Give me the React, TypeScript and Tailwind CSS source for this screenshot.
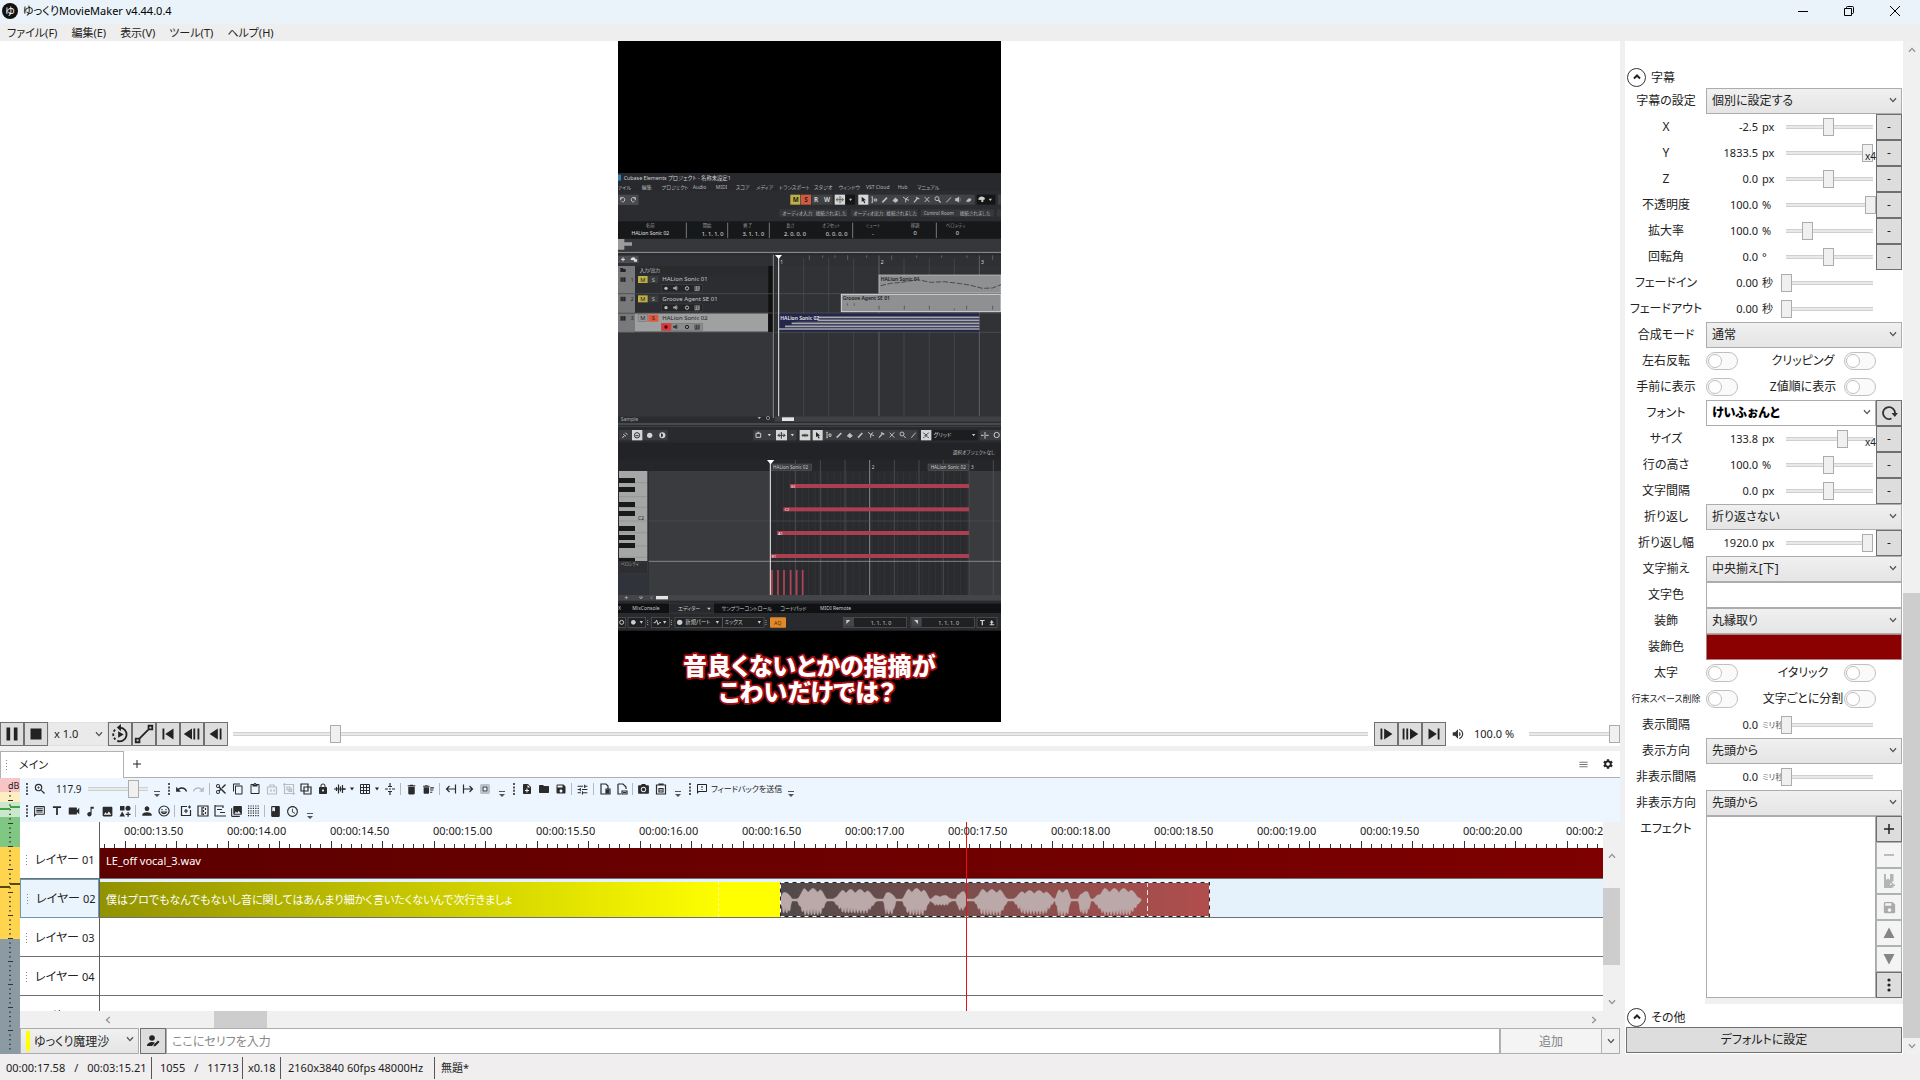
import { useState } from 'react';
import type { ReactNode } from 'react';
import {
  MdAccessTime,
  MdBlurOn,
  MdBook,
  MdContentCopy,
  MdContentCut,
  MdContentPaste,
  MdDelete,
  MdDeleteSweep,
  MdFolder,
  MdGridOn,
  MdImage,
  MdLock,
  MdMenu,
  MdMusicNote,
  MdNoteAdd,
  MdOutlineFeedback,
  MdOutlineMessage,
  MdPerson,
  MdPhotoCamera,
  MdPhotoLibrary,
  MdRedo,
  MdSave,
  MdSelectAll,
  MdSettings,
  MdTitle,
  MdTune,
  MdUndo,
  MdVideocam,
  MdVolumeUp,
  MdZoomIn,
} from 'react-icons/md';

const CJK = '"Noto Sans","Noto Sans CJK JP",sans-serif';

/* ---------- 共通パーツ ---------- */

function Chevron({ className = '' }: { className?: string }) {
  return (
    <svg viewBox="0 0 8 8" className={`w-2 h-2 fill-none stroke-[#555] ${className}`} strokeWidth="1.3">
      <path d="M1 2.2 4 5.6 7 2.2" />
    </svg>
  );
}

function Dropdown({ label, value, white, bold }: { label: string; value: string; white?: boolean; bold?: boolean }) {
  return (
    <div className="relative flex-1 min-w-0 h-[26px]">
      <select
        aria-label={label}
        className={`appearance-none w-full h-full border border-[#acacac] pl-[5px] pr-5 text-[12px] leading-4 ${
          white ? 'bg-white' : 'bg-linear-to-b from-[#f0f0f0] to-[#e5e5e5]'
        } ${bold ? 'font-black text-black' : ''}`}
      >
        <option>{value}</option>
      </select>
      <Chevron className="absolute right-[5px] top-[8px] pointer-events-none" />
    </div>
  );
}

function Slider({ label, value, className = '' }: { label: string; value: number; className?: string }) {
  return (
    <input
      type="range"
      aria-label={label}
      defaultValue={value}
      className={`appearance-none h-[18px] m-0 bg-no-repeat bg-right bg-[length:calc(100%-5px)_4px] bg-[linear-gradient(#d0d0d0_1px,#e7eaea_1px,#e7eaea_3px,#d0d0d0_3px)] [&::-webkit-slider-thumb]:appearance-none [&::-webkit-slider-thumb]:w-[11px] [&::-webkit-slider-thumb]:h-[18px] [&::-webkit-slider-thumb]:bg-[#f0f0f0] [&::-webkit-slider-thumb]:border [&::-webkit-slider-thumb]:border-[#acacac] ${className}`}
    />
  );
}

function Toggle({ label }: { label: string }) {
  return (
    <input
      type="checkbox"
      role="switch"
      aria-label={label}
      className="appearance-none w-8 h-[18px] shrink-0 rounded-full border border-[#c0c0c0] bg-[#fafafa] flex items-center pl-px before:block before:w-[14px] before:h-[14px] before:rounded-full before:border before:border-[#c0c0c0] before:bg-white"
    />
  );
}

function Square({ label, children, disabled }: { label: string; children: ReactNode; disabled?: boolean }) {
  return (
    <button
      aria-label={label}
      disabled={disabled}
      className={`w-[26px] h-[26px] shrink-0 border flex items-center justify-center text-[12px] ${
        disabled ? 'bg-[#f4f4f4] border-[#adb2b5] text-[#aaa]' : 'bg-[#ddd] border-[#707070] text-[#222]'
      }`}
    >
      {children}
    </button>
  );
}

/* ---------- 字幕の設定パネル ---------- */

function Row({ label, children, small }: { label: string; children: ReactNode; small?: boolean }) {
  return (
    <div className="flex items-center h-[26px]">
      <span className={`w-[80px] shrink-0 text-center whitespace-nowrap ${small ? 'text-[9px]' : 'text-[12px]'}`}>{label}</span>
      {children}
    </div>
  );
}

type NumProps = {
  label: string;
  value: string;
  unit: string;
  pos: number;
  button?: boolean;
  x4?: boolean;
  tinyUnit?: boolean;
  wide?: boolean;
};

function NumRow({ label, value, unit, pos, button, x4, tinyUnit, wide }: NumProps) {
  return (
    <Row label={label}>
      <span className="w-[52px] shrink-0 text-right text-[11px]">{value}</span>
      <span className={`w-[23px] shrink-0 pl-1 whitespace-nowrap ${tinyUnit ? 'text-[8px] text-[#555]' : 'text-[11px]'}`}>{unit}</span>
      <span className={`relative flex-1 min-w-0 flex ${wide ? '' : 'pr-[3px]'}`}>
        <Slider label={label} value={pos} className="w-full" />
        {x4 && <span className="absolute right-0 top-[6px] text-[10px] leading-3">x4</span>}
      </span>
      {button ? <Square label={`${label} アニメーション`}>-</Square> : <span className="w-[26px] shrink-0" />}
    </Row>
  );
}

function SelectRow({ label, value }: { label: string; value: string }) {
  return (
    <Row label={label}>
      <Dropdown label={label} value={value} />
    </Row>
  );
}

function ToggleRow({ a, b, small }: { a: string; b: string; small?: boolean }) {
  return (
    <Row label={a} small={small}>
      <Toggle label={a} />
      <span className="flex-1 pl-6 text-center whitespace-nowrap">{b}</span>
      <Toggle label={b} />
      <span className="w-[26px] shrink-0" />
    </Row>
  );
}

function SectionHead({ title }: { title: string }) {
  return (
    <div className="flex items-center gap-[5px] h-[22px] pl-px">
      <button aria-label={title} className="w-[19px] h-[19px] rounded-full border border-[#333] bg-white flex items-center justify-center">
        <svg viewBox="0 0 10 10" className="w-[10px] h-[10px] fill-none stroke-[#222]" strokeWidth="2">
          <path d="M2 6.5 5 3.5 8 6.5" />
        </svg>
      </button>
      <span className="pt-[2px]">{title}</span>
    </div>
  );
}

function SettingsPanel() {
  return (
    <aside className="w-[295px] shrink-0 flex bg-white">
      <div className="flex-1 min-w-0 pl-px pr-px pt-[25px] flex flex-col overflow-hidden">
        <SectionHead title="字幕" />
        <SelectRow label="字幕の設定" value="個別に設定する" />
        <NumRow label="X" value="-2.5" unit="px" pos={52} button />
        <NumRow label="Y" value="1833.5" unit="px" pos={100} button x4 />
        <NumRow label="Z" value="0.0" unit="px" pos={52} button />
        <NumRow label="不透明度" value="100.0" unit="%" pos={100} button wide />
        <NumRow label="拡大率" value="100.0" unit="%" pos={26} button />
        <NumRow label="回転角" value="0.0" unit="°" pos={52} button />
        <NumRow label="フェードイン" value="0.00" unit="秒" pos={0} />
        <NumRow label="フェードアウト" value="0.00" unit="秒" pos={0} />
        <SelectRow label="合成モード" value="通常" />
        <ToggleRow a="左右反転" b="クリッピング" />
        <ToggleRow a="手前に表示" b="Z値順に表示" />
        <Row label="フォント">
          <Dropdown label="フォント" value="けいふぉんと" white bold />
          <Square label="フォントを更新">
            <svg viewBox="0 0 18 18" className="w-[18px] h-[18px]">
              <path d="M11.5 14.5A6 6 0 1 1 15 9.5" className="fill-none stroke-[#333]" strokeWidth="1.8" />
              <path d="M11.5 9h6.5l-3.200 4z" className="fill-[#333]" />
            </svg>
          </Square>
        </Row>
        <NumRow label="サイズ" value="133.8" unit="px" pos={69} button x4 />
        <NumRow label="行の高さ" value="100.0" unit="%" pos={52} button />
        <NumRow label="文字間隔" value="0.0" unit="px" pos={52} button />
        <SelectRow label="折り返し" value="折り返さない" />
        <NumRow label="折り返し幅" value="1920.0" unit="px" pos={100} button />
        <SelectRow label="文字揃え" value="中央揃え[下]" />
        <Row label="文字色">
          <button aria-label="文字色" className="flex-1 h-[26px] bg-white border border-[#acacac]" />
        </Row>
        <SelectRow label="装飾" value="丸縁取り" />
        <Row label="装飾色">
          <button aria-label="装飾色" className="flex-1 h-[26px] bg-[#8b0000] border border-[#b08080]" />
        </Row>
        <ToggleRow a="太字" b="イタリック" />
        <ToggleRow a="行末スペース削除" b="文字ごとに分割" small />
        <NumRow label="表示間隔" value="0.0" unit="ミリ秒" pos={0} tinyUnit />
        <SelectRow label="表示方向" value="先頭から" />
        <NumRow label="非表示間隔" value="0.0" unit="ミリ秒" pos={0} tinyUnit />
        <SelectRow label="非表示方向" value="先頭から" />
        <div className="flex">
          <span className="w-[80px] shrink-0 text-center leading-[26px]">エフェクト</span>
          <div className="flex-1 border border-[#acacac]" />
          <div className="flex flex-col">
            <Square label="エフェクトを追加">
              <svg viewBox="0 0 12 12" className="w-3 h-3 stroke-[#222]" strokeWidth="1.5"><path d="M6 1v10M1 6h10" /></svg>
            </Square>
            <Square label="エフェクトを削除" disabled>
              <svg viewBox="0 0 12 12" className="w-3 h-3 stroke-[#aaa]" strokeWidth="1.5"><path d="M1 6h10" /></svg>
            </Square>
            <Square label="テンプレートに追加" disabled>
              <svg viewBox="0 0 12 14" className="w-3 h-[14px] fill-[#b4b4b4]">
                <path d="M1 0h2v6l2-1.500L7 6V0h3.500v7.500H9v2H7V11h2v3H1z" /><path d="M9 9h1.500v1.500H12V12h-1.500v1.500H9V12H8v-1.500h1z" />
              </svg>
            </Square>
            <Square label="保存" disabled><MdSave size={15} /></Square>
            <Square label="上へ" disabled>
              <svg viewBox="0 0 12 12" className="w-3 h-3 fill-[#858585]"><path d="M6 0.500 11.500 11H0.500z" /></svg>
            </Square>
            <Square label="下へ" disabled>
              <svg viewBox="0 0 12 12" className="w-3 h-3 fill-[#858585]"><path d="M6 11.500 0.500 1h11z" /></svg>
            </Square>
            <Square label="その他の操作">
              <svg viewBox="0 0 12 14" className="w-3 h-[14px] fill-[#222]">
                <circle cx="6" cy="2" r="1.600" /><circle cx="6" cy="7" r="1.600" /><circle cx="6" cy="12" r="1.600" />
              </svg>
            </Square>
          </div>
        </div>
        <div className="ml-[79px] -mr-px h-[6px] shrink-0 bg-[#f0f0f0]" />
        <div className="h-[23px] pt-[2px]"><SectionHead title="その他" /></div>
        <button className="h-[26px] shrink-0 border border-[#707070] bg-[#ddd] text-[12px]">デフォルトに設定</button>
      </div>
      <div className="w-[17px] shrink-0 bg-[#f0f0f0] flex flex-col items-center">
        <Chevron className="rotate-180 mt-[5px] shrink-0 opacity-60" />
        <div className="flex-[538] " />
        <div className="w-full flex-[445] bg-[#cdcdcd]" />
        <Chevron className="my-1 shrink-0 opacity-60" />
      </div>
    </aside>
  );
}

/* ---------- プレビュー ---------- */

const arrangeLines = [506, 581, 656, 731, 807, 882, 958, 1033, 1108];
const editorLines = [481, 556, 631, 705, 779, 853, 927, 1000, 1077, 1150];
const notes = [
  { x: 540, y: 192, name: 'E2' },
  { x: 520, y: 262, name: 'C2' },
  { x: 501, y: 333, name: 'A1' },
  { x: 482, y: 402, name: 'E1' },
];

function ToolGlyphs({ x, y }: { x: number; y: number }) {
  // 矢印、範囲、鉛筆、消しゴム、はさみ、のり、ミュート、ズーム、線
  return (
    <g transform={`translate(${x} ${y})`} fill="none" stroke="#bdbdbd" strokeWidth="3">
      <rect x="-15" y="-15" width="30" height="30" fill="#d5d5d5" stroke="none" />
      <path d="M-5-9v16l4-4 4 8 3-2-4-7h6z" fill="#222" stroke="none" />
      <path d="M24-8h5M24 8h5M27-8V8M33-2h7v6h-7z" />
      <path d="M57 8 71-6" strokeWidth="5" />
      <path d="M89 3 96-5 104 2 97 8z" fill="#bdbdbd" />
      <path d="M119-8 127-2 135-8M127-2v10M127-2l10 4" />
      <path d="M152 8 163-5M158-7l10 5" strokeWidth="4" />
      <path d="M184-8 198 7M198-8 184 7" />
      <circle cx="221" cy="-3" r="6" /><path d="m225 1 7 8" strokeWidth="4" />
      <path d="M249 8 263-7" />
    </g>
  );
}

function Track({ y, no, name, selected }: { y: number; no: number; name: string; selected?: boolean }) {
  return (
    <g fontSize="17">
      <rect x="24" y={y} width="51" height="57" fill="#77797b" />
      <rect x="75" y={y} width="399" height="55" fill={selected ? '#9fa1a1' : '#2c2d30'} />
      <path d={`M31 ${y + 8}h16v14h-16zM36 ${y + 8}v14M41 ${y + 8}v14`} fill="#222" stroke="#777" />
      <text x="62" y={y + 21} fill="#222" fontSize="15">{no}</text>
      <rect x="84" y={y + 4} width="29" height="21" fill={selected ? '#999' : '#bdb047'} stroke={selected ? '#555' : 'none'} />
      <text x="91" y={y + 21} fill="#222">M</text>
      <rect x="115" y={y + 4} width="30" height="21" fill={selected ? '#e0553c' : '#3a3c3e'} />
      <text x="125" y={y + 21} fill={selected ? '#222' : '#bbb'}>S</text>
      <text x="157" y={y + 20} fill={selected ? '#222' : '#c8c8c8'} fontSize="18">{name}</text>
      <rect x="154" y={y + 30} width="124" height="22" fill={selected ? '#8b8d8d' : '#242527'} stroke="#5b5b5b" />
      {selected && <rect x="154" y={y + 30} width="30" height="22" fill="#d8393a" />}
      <circle cx="168" cy={y + 41} r="5" fill={selected ? '#400' : '#bbb'} />
      <path d={`M190 ${y + 38}h4l6-4v13l-6-4h-4zM203 ${y + 36}v9`} fill={selected ? '#333' : '#aaa'} stroke={selected ? '#333' : '#aaa'} />
      <circle cx="231" cy={y + 41} r="5" fill="none" stroke={selected ? '#222' : '#bbb'} strokeWidth="3" />
      <path d={`M255 ${y + 34}v14h4v-14M261 ${y + 34}v14h4v-14M268 ${y + 34}v14`} stroke={selected ? '#222' : '#bbb'} strokeWidth="2" fill="none" />
    </g>
  );
}

function ArrangeWindow() {
  return (
    <g transform="translate(0 357)">
      <rect x="24" y="39" width="1149" height="780" fill="#2a2c2f" />
      <rect x="24" y="39" width="1149" height="54" fill="#27292d" />
      <rect x="24" y="44" width="9" height="18" fill="#2d7fb5" />
      <text x="41" y="61" fontSize="16" fill="#d2d2d2">Cubase Elements プロジェクト - 名称未設定1</text>
      <g fontSize="15" fill="#b5b5b5">
        <text x="24" y="87">ァイル</text><text x="95" y="87">編集</text><text x="155" y="87">プロジェクト</text>
        <text x="248" y="87">Audio</text><text x="317" y="87">MIDI</text><text x="377" y="87">スコア</text>
        <text x="438" y="87">メディア</text><text x="508" y="87">トランスポート</text><text x="612" y="87">スタジオ</text>
        <text x="686" y="87">ウィンドウ</text><text x="768" y="87">VST Cloud</text><text x="863" y="87">Hub</text>
        <text x="921" y="87">マニュアル</text>
      </g>
      <rect x="24" y="104" width="62" height="31" fill="#48494c" />
      <g fill="none" stroke="#c8c8c8" strokeWidth="3">
        <path d="M38 113h-6v8M32 115c8-5 13-1 12 5s-5 6-9 5" /><path d="M69 113h7v8M76 115c-8-5-13-1-12 5s5 6 9 5" />
      </g>
      <rect x="541" y="104" width="30" height="30" fill="#bdb047" />
      <rect x="573" y="104" width="30" height="30" fill="#d4573f" />
      <rect x="605" y="104" width="63" height="30" fill="#404246" />
      <g fontSize="19" fontWeight="700" fill="#222">
        <text x="548" y="126">M</text><text x="583" y="126">S</text>
        <text x="612" y="126" fill="#ccc">R</text><text x="642" y="126" fill="#ccc">W</text>
      </g>
      <rect x="674" y="104" width="31" height="30" fill="#d5d5d5" />
      <path d="M679 119h21M690 108v22M684 113l-5 6 5 6M695 113l5 6-5 6" stroke="#333" fill="none" strokeWidth="2" />
      <rect x="707" y="104" width="28" height="30" fill="#151515" />
      <path d="M717 116h9l-4 7z" fill="#ccc" />
      <rect x="744" y="104" width="350" height="30" fill="#404246" />
      <ToolGlyphs x={760} y={119} />
      <path d="M1036 115h5l6-5v17l-6-4h-5zM1051 113v11M1068 124c5 3 14 1 15-4s-6-6-11-1" stroke="#bdbdbd" fill="#bdbdbd" />
      <rect x="1100" y="104" width="56" height="30" fill="#151515" />
      <path d="M1105 119c0-12 20-12 20-1l-5 2v6h-6v-6z" fill="#ccc" /><path d="M1136 116h10l-5 7z" fill="#ccc" />
      <rect x="1164" y="104" width="9" height="30" fill="#404246" />
      <g fill="#36383b">
        <rect x="508" y="148" width="204" height="22" /><rect x="722" y="148" width="200" height="22" />
        <rect x="932" y="148" width="220" height="22" /><rect x="1160" y="148" width="13" height="22" />
      </g>
      <g fontSize="14" fill="#b5b5b5">
        <text x="517" y="164">オーディオ入力</text><text x="617" y="164">接続されました</text>
        <text x="730" y="164">オーディオ出力</text><text x="829" y="164">接続されました</text>
        <text x="941" y="164">Control Room</text><text x="1049" y="164">接続されました</text>
      </g>
      <rect x="24" y="184" width="1149" height="52" fill="#17181a" />
      <path d="M229 188v46M353 188v46M478 188v46M728 188v46M979 188v46" stroke="#777" strokeWidth="3" />
      <g fontSize="13" fill="#999" textAnchor="middle">
        <text x="121" y="202">名前</text><text x="291" y="202">開始</text><text x="413" y="202">終了</text><text x="541" y="202">長さ</text>
        <text x="664" y="202">オフセット</text><text x="789" y="202">ミュート</text><text x="915" y="202">移調</text><text x="1037" y="202">ベロシティ</text>
      </g>
      <g fontSize="17" fill="#e0e0e0" textAnchor="middle" className="whitespace-pre">
        <text x="121" y="225" fontSize="15">HALion Sonic 02</text>
        <text x="308" y="227">1.  1.  1.   0</text><text x="430" y="227">3.  1.  1.   0</text>
        <text x="555" y="227">2.  0.  0.   0</text><text x="680" y="227">0.  0.  0.   0</text>
        <text x="789" y="227">-</text><text x="915" y="225">0</text><text x="1042" y="225">0</text>
      </g>
      <rect x="24" y="237" width="1149" height="37" fill="#35373a" />
      <path d="M24 237h19v10h23v10H43v12H24z" fill="#9b9d9d" />
      <path d="M24 277h1149" stroke="#999" strokeWidth="3" />
      <rect x="24" y="286" width="1149" height="32" fill="#2e3033" />
      <rect x="24" y="287" width="62" height="22" fill="#4b4d50" />
      <path d="M39 292v12M33 298h12" stroke="#ddd" strokeWidth="3" /><path d="M62 300c0-12 16-10 14-2h5v7h-9v-4z" fill="#ddd" />
      <rect x="24" y="318" width="466" height="28" fill="#292b2d" /><rect x="24" y="318" width="51" height="28" fill="#77797b" />
      <path d="M31 324h7l3 3h6v9H31z" fill="#222" />
      <text x="89" y="335" fontSize="14" fill="#ccc">入力/出力</text>
      <rect x="24" y="518" width="466" height="252" fill="#343639" />
      <rect x="475" y="318" width="14" height="200" fill="#101010" />
      <path d="M490 284v490" stroke="#8b8b8b" strokeWidth="3" />
      <rect x="494" y="318" width="679" height="450" fill="#303236" />
      {arrangeLines.map((x, i) => (
        <path key={x} d={`M${x} ${i % 4 === 0 ? 286 : 295}V768`} stroke={i % 4 === 0 ? '#77797b' : '#4c4e51'} strokeWidth="2" />
      ))}
      <path d="M598 286v14M638 286v8M675 286v8M713 286v14M770 286v8M845 286v14M920 286v8M995 286v8M1071 286v8M1148 286v14" stroke="#777" strokeWidth="2" />
      <g fontSize="15" fill="#ddd"><text x="511" y="312">1</text><text x="812" y="312">2</text><text x="1113" y="312">3</text></g>
      <Track y={344} no={1} name="HALion Sonic 01" />
      <Track y={402} no={2} name="Groove Agent SE 01" />
      <Track y={460} no={3} name="HALion Sonic 02" selected />
      <path d="M24 401h466M24 459h466M24 517h466M494 401h679M494 459h679M494 517h679" stroke="#55585a" strokeWidth="2" />
      <rect x="807" y="345" width="366" height="54" fill="#8e9091" stroke="#c9c9c9" strokeWidth="2" />
      <path d="M812 377l30-7 35-3 45-8 40 8 40-2 50 6 30 5 35 9 30-1 26-10" stroke="#4b4b4b" strokeWidth="3" strokeDasharray="16 5" fill="none" />
      <rect x="694" y="403" width="479" height="52" fill="#8e9091" stroke="#d9d9d9" strokeWidth="3" />
      <path d="M712 430v7M733 430v7M807 437v12M883 437v12M958 437v12M1033 445v6M1070 437v12M1148 437v12" stroke="#444" strokeWidth="2" />
      <rect x="507" y="461" width="601" height="54" fill="#25264b" />
      <path d="M623 472h485M560 481h548M545 490h563M525 499h583M507 507h601" stroke="#a5a5aa" strokeWidth="5" />
      <rect x="507" y="463" width="116" height="21" fill="#25264b" />
      <g fontSize="15" fontWeight="600">
        <text x="812" y="362" fill="#1d1d1d">HALion Sonic 01</text>
        <text x="698" y="420" fill="#1d1d1d">Groove Agent SE 01</text>
        <text x="511" y="479" fill="#e8e8e8">HALion Sonic 02</text>
      </g>
      <path d="M506 290v480" stroke="#e0e0e0" strokeWidth="3" /><path d="M495 285h21l-10 12z" fill="#fff" />
      <text x="32" y="782" fontSize="15" fill="#aaa">Sample</text>
      <path d="M443 771h10l-5 7z" fill="#aaa" /><circle cx="474" cy="774" r="5" fill="none" stroke="#aaa" strokeWidth="2" />
      <rect x="494" y="769" width="679" height="16" fill="#3f4144" /><rect x="516" y="772" width="36" height="11" fill="#e4e4e4" />
      <path d="M24 792h1149M24 801h1149" stroke="#888" strokeWidth="2" />
    </g>
  );
}

function KeyEditor() {
  return (
    <g transform="translate(0 1137)">
      <rect x="24" y="20" width="1149" height="612" fill="#292a2d" />
      <g fill="#3a3c3f">
        <rect x="27" y="30" width="146" height="31" /><rect x="430" y="30" width="130" height="31" />
        <rect x="568" y="30" width="355" height="31" /><rect x="1110" y="30" width="63" height="31" />
      </g>
      <g fill="#d5d5d5">
        <rect x="66" y="30" width="31" height="31" /><rect x="498" y="30" width="33" height="31" />
        <rect x="569" y="30" width="32" height="31" /><rect x="933" y="30" width="31" height="31" />
        <circle cx="119" cy="46" r="8" /><circle cx="157" cy="46" r="9" />
        <path d="M473 42h10l-5 7zM542 42h10l-5 7z" />
      </g>
      <path d="M153 40a6 6 0 0 1 0 12z" fill="#333" />
      <g fill="none" stroke="#333" strokeWidth="3">
        <circle cx="81" cy="46" r="8" /><path d="M76 47h10M504 46h21M514 36v20M509 41l-5 5 5 5M520 41l5 5-5 5M575 46h20M579 42v8M585 41v10M591 42v8" />
        <circle cx="948" cy="46" r="3" /><path d="M940 38l4 4M956 38l-4 4M940 54l4-4M956 54l-4-4" />
      </g>
      <path d="m37 54 5-6M40 43l8 6M46 38l6 6M438 40h14v12h-14zM442 37h6M1113 46h8M1128 46h8M1125 36v20" stroke="#ccc" strokeWidth="3" fill="none" />
      <circle cx="1160" cy="45" r="8" fill="none" stroke="#ccc" strokeWidth="3" />
      <g transform="translate(623 45)" fill="none" stroke="#bdbdbd" strokeWidth="3">
        <rect x="-15" y="-15" width="30" height="31" fill="#d5d5d5" stroke="none" />
        <path d="M-5-9v16l4-4 4 8 3-2-4-7h6z" fill="#222" stroke="none" />
        <path d="M26-8h5M26 8h5M28-8V8M34-3h6v7h-6z" />
        <path d="M57 8 71-6M121 8 134-6" strokeWidth="5" />
        <path d="M89 3 96-5 104 2 97 8z" fill="#bdbdbd" />
        <path d="M151-8 159-2 167-8M159-2v10M159-2l10 4M216-7l14 15M230-8 216 7" />
        <path d="M184 8 195-5M190-7l10 5" strokeWidth="4" />
        <circle cx="253" cy="-3" r="6" /><path d="m257 1 7 8M281 8 294-7" />
      </g>
      <rect x="966" y="30" width="137" height="31" fill="#1c1d1f" />
      <path d="M1086 42h10l-5 7z" fill="#ccc" />
      <text x="971" y="51" fontSize="16" fill="#ccc">グリッド</text>
      <rect x="24" y="68" width="1149" height="50" fill="#222326" />
      <text x="1028" y="102" fontSize="14" fill="#bbb">選択オブジェクトなし</text>
      <rect x="24" y="118" width="1149" height="35" fill="#252629" />
      <rect x="116" y="153" width="1057" height="372" fill="#3a3b3e" />
      <rect x="482" y="153" width="595" height="372" fill="#2a2b2e" />
      {Array.from({ length: 32 }, (_, i) => (
        <path key={i} d={`M${482 + i * 19} 153v372`} stroke="#37383b" strokeWidth="2" />
      ))}
      {editorLines.map((x, i) => (
        <path key={x} d={`M${x} 120V525`} stroke={i === 4 ? '#b5b5b5' : '#5a5b5e'} strokeWidth="2" />
      ))}
      <path d="M116 303h1057" stroke="#4e5053" strokeWidth="2" />
      <rect x="482" y="132" width="123" height="20" fill="#3a3b3e" stroke="#777" /><rect x="954" y="132" width="122" height="20" fill="#3a3b3e" stroke="#777" />
      <g fontSize="14" fill="#ccc">
        <text x="489" y="147">HALion Sonic 02</text><text x="962" y="147">HALion Sonic 02</text>
        <text x="785" y="147">2</text><text x="1083" y="147">3</text>
      </g>
      <rect x="27" y="153" width="85" height="270" fill="#a5a6a6" />
      <path d="M27 188h85M27 230h85M27 262h85M27 303h85M27 338h85M27 378h85M27 412h85" stroke="#777" strokeWidth="1" />
      {[174, 201, 246, 273, 318, 345, 369, 414].map((y) => (
        <rect key={y} x="27" y={y} width="48" height={y === 414 ? 9 : 15} fill="#19191b" />
      ))}
      <text x="84" y="299" fontSize="15" fill="#222">C2</text>
      {notes.map((n) => (
        <g key={n.y}>
          <rect x={n.x} y={n.y} width={1077 - n.x} height="12" fill="#ab3f51" />
          <text x={n.x + 4} y={n.y + 11} fontSize="11" fill="#fff">{n.name}</text>
        </g>
      ))}
      <path d="M116 424h1057" stroke="#aaa" strokeWidth="2" />
      <rect x="27" y="426" width="85" height="34" fill="#2c2e31" stroke="#555" />
      <text x="32" y="439" fontSize="12" fill="#bbb">ベロシティ</text>
      <rect x="24" y="461" width="92" height="64" fill="#30333a" />
      <path d="M486 450v75M504 450v75M522 450v75M542 450v75M560 450v75M578 450v75" stroke="#b84358" strokeWidth="5" />
      <path d="M481 128v397" stroke="#e8e8e8" strokeWidth="3" /><path d="M471 120h22l-11 13z" fill="#fff" />
      <rect x="24" y="525" width="1149" height="17" fill="#434548" /><rect x="138" y="528" width="36" height="10" fill="#e4e4e4" />
      <path d="M49 528v10M44 533h10M88 531h10l-5 6zM127 529l-4 4 4 4" stroke="#bbb" strokeWidth="2" fill="none" />
      <rect x="24" y="551" width="1149" height="28" fill="#101113" />
      <rect x="179" y="551" width="132" height="28" fill="#27282b" stroke="#555" />
      <g fontSize="15" fill="#ccc">
        <text x="24" y="571">X</text><text x="67" y="571">MixConsole</text><text x="204" y="571">エディター</text>
        <text x="335" y="571">サンプラーコントロール</text><text x="511" y="571">コードパッド</text><text x="630" y="571">MIDI Remote</text>
      </g>
      <path d="M291 563h11l-5 7z" fill="#ccc" />
      <g fill="#202123" stroke="#5a5a5a" strokeWidth="2">
        <rect x="24" y="592" width="22" height="30" /><rect x="54" y="592" width="53" height="30" /><rect x="124" y="592" width="54" height="30" />
        <rect x="195" y="592" width="143" height="30" /><rect x="338" y="592" width="124" height="30" />
        <rect x="700" y="592" width="190" height="30" /><rect x="903" y="592" width="190" height="30" /><rect x="1101" y="592" width="60" height="30" />
      </g>
      <circle cx="35" cy="607" r="6" fill="none" stroke="#ccc" strokeWidth="3" />
      <path d="M113 600v16M184 600v16M468 600v16" stroke="#999" strokeWidth="3" strokeDasharray="3 3" />
      <rect x="480" y="592" width="48" height="31" fill="#e08a2c" rx="3" />
      <rect x="702" y="594" width="30" height="26" fill="#444649" /><rect x="905" y="594" width="30" height="26" fill="#444649" />
      <g fill="#ccc">
        <circle cx="70" cy="607" r="7" /><circle cx="209" cy="607" r="8" />
        <path d="M89 603h10l-5 8zM159 603h10l-5 8zM317 603h10l-5 8zM443 603h10l-5 8zM709 600h12l-12 12zM924 600v12l-12-12z" />
        <path d="M1110 600h14v3h-5v13h-4v-13h-5zM1145 600l6 8h-4v5h6v3h-14v-3h4v-5h-4z" />
      </g>
      <path d="M131 608h5l4-8 4 14 4-6h5" stroke="#ccc" strokeWidth="3" fill="none" />
      <g fontSize="16" fill="#ccc" className="whitespace-pre">
        <text x="226" y="613">新規パート</text><text x="344" y="613">ミックス</text>
        <text x="492" y="614" fill="#5a3000">AQ</text>
        <text x="782" y="615">1.   1.   1.    0</text><text x="985" y="615">1.   1.   1.    0</text>
      </g>
    </g>
  );
}

function Preview() {
  return (
    <div className="flex-1 min-h-0 bg-white flex justify-center pr-[2px]">
      <svg viewBox="24 0 1149 2043" className="h-full bg-black" fontFamily={CJK}>
        <ArrangeWindow />
        <KeyEditor />
        <g
          fontSize="72"
          fontWeight="900"
          textAnchor="middle"
          fill="#fff"
          stroke="#a50d10"
          strokeWidth="11"
          strokeLinejoin="round"
          paintOrder="stroke"
        >
          <text x="598" y="1901">音良くないとかの指摘が</text>
          <text x="592" y="1980">こわいだけでは？</text>
        </g>
      </svg>
    </div>
  );
}

function PlayButton({ label, children }: { label: string; children: ReactNode }) {
  return (
    <button aria-label={label} className="w-6 h-6 shrink-0 border border-[#707070] bg-[#ddd] flex items-center justify-center">
      <svg viewBox="0 0 24 24" className="w-[22px] h-[22px] shrink-0 fill-[#222]">{children}</svg>
    </button>
  );
}

function PlayerBar() {
  return (
    <div className="h-6 shrink-0 flex items-center bg-white">
      <PlayButton label="一時停止"><path d="M6 5h4v14H6zM14 5h4v14h-4z" /></PlayButton>
      <PlayButton label="停止"><path d="M6 6h12v12H6z" /></PlayButton>
      <div className="relative w-[60px] h-6 shrink-0">
        <select aria-label="再生速度" className="appearance-none w-full h-full pl-[5px] bg-[#eaeaea] border border-[#e0e0e0] text-[11px] leading-4">
          <option>x 1.0</option>
        </select>
        <Chevron className="absolute right-[5px] top-2 pointer-events-none" />
      </div>
      <PlayButton label="ループ再生">
        <path d="M12 5a7.500 7.500 0 1 1-3 14.500" fill="none" stroke="#222" strokeWidth="2" />
        <path d="M7 18a7.500 7.500 0 0 1 0-11" fill="none" stroke="#222" strokeWidth="2" strokeDasharray="2.500 2" />
        <path d="M13 1v8L8.500 5zM10 9l6 3.500-6 3.500z" />
      </PlayButton>
      <PlayButton label="範囲">
        <path d="M3 17h4v4H3zM17 3h4v4h-4zM7 17 17 7" fill="none" stroke="#222" strokeWidth="2" />
      </PlayButton>
      <PlayButton label="先頭へ"><path d="M6 6h2v12H6zM18 6v12l-9-6z" /></PlayButton>
      <PlayButton label="5フレーム戻る"><path d="M12 6v12L3 12zM13.500 6h2v12h-2zM18 6h2v12h-2z" /></PlayButton>
      <PlayButton label="1フレーム戻る"><path d="M14 6v12l-9-6zM16 6h2v12h-2z" /></PlayButton>
      <div className="flex-1 min-w-0 flex pr-[6px]">
        <Slider label="再生位置" value={9} className="w-full" />
      </div>
      <PlayButton label="1フレーム進む"><path d="M6 6h2v12H6zM10 6v12l9-6z" /></PlayButton>
      <PlayButton label="5フレーム進む"><path d="M4 6h2v12H4zM8 6h2v12H8zM12 6v12l9-6z" /></PlayButton>
      <PlayButton label="末尾へ"><path d="M16 6h2v12h-2zM6 6v12l9-6z" /></PlayButton>
      <MdVolumeUp size={14} className="ml-[5px] shrink-0 text-[#333]" />
      <span className="ml-[9px] w-[50px] shrink-0 text-[11px]">100.0 %</span>
      <Slider label="音量" value={100} className="w-[96px] shrink-0" />
    </div>
  );
}

/* ---------- ツールバー ---------- */

function Tool({ label, children, off }: { label: string; children: ReactNode; off?: boolean }) {
  return (
    <button aria-label={label} className={`w-[17px] h-[18px] shrink-0 flex items-center justify-center ${off ? 'text-[#b9bdc2]' : 'text-[#2b2b2b]'}`}>
      {children}
    </button>
  );
}

function Draw({ d }: { d: string }) {
  return (
    <svg viewBox="0 0 12 12" className="w-3 h-3 fill-none stroke-current" strokeWidth="1.2"><path d={d} /></svg>
  );
}

const Sep = () => <span className="w-[5px] shrink-0 flex justify-center"><span className="w-px h-3 bg-[#b5b9be]" /></span>;

const Grip = () => (
  <svg viewBox="0 0 8 12" className="w-2 h-3 shrink-0 fill-[#555]">
    <path d="M3 0h2v2H3zM3 3.400h2v2H3zM3 6.800h2v2H3zM3 10h2v2H3z" />
  </svg>
);

const Overflow = () => (
  <svg viewBox="0 0 17 18" className="w-[17px] h-[18px] shrink-0 fill-[#555]"><path d="M6 11h6v1H6zM6 14h6l-3 3z" /></svg>
);

const Caret = () => <svg viewBox="0 0 8 12" className="w-2 h-3 shrink-0 fill-[#222]"><path d="M2 4.500h4L4 7.500z" /></svg>;

function Toolbar() {
  return (
    <div className="h-11 shrink-0 bg-[#edf5fe] pl-[3px] pt-[2px] flex flex-col gap-[4px] overflow-hidden">
      <div className="flex items-center h-[18px]">
        <Grip />
        <Tool label="拡大"><MdZoomIn size={14} /></Tool>
        <span className="ml-2 w-[27px] shrink-0 text-[10px]">117.9</span>
        <Slider label="ズーム" value={84} className="w-[65px] [&::-webkit-slider-thumb]:h-[16px]" />
        <Overflow />
        <Grip />
        <Tool label="元に戻す"><MdUndo size={13} /></Tool>
        <Tool label="やり直す" off><MdRedo size={13} /></Tool>
        <Sep />
        <Tool label="切り取り"><MdContentCut size={12} /></Tool>
        <Tool label="コピー"><MdContentCopy size={12} /></Tool>
        <Tool label="貼り付け"><MdContentPaste size={12} /></Tool>
        <Tool label="属性の貼り付け" off><Draw d="M1.500 4h9v7h-9zM4 4V2h4v2M5 6v3M8 6v3" /></Tool>
        <Tool label="グループ化" off><Draw d="M1.500 1.500h9v9h-9zM4 4h3v3H4zM6 6h2.500v2.500H6zM0 1.500h3M1.500 0v3M9 10.500h3M10.500 9v3" /></Tool>
        <Tool label="グループ解除"><Draw d="M1 1h7v7H1zM4 4h7v7H4zM4 4h4v4H4z" /></Tool>
        <Tool label="ロック"><MdLock size={12} /></Tool>
        <Tool label="波形"><Draw d="M0 6h12M2.500 4v4M4.500 1.500v9M6.500 3.500v5M8.500 2v8M10 5v2" /></Tool>
        <Caret />
        <Tool label="グリッド"><MdGridOn size={12} /></Tool>
        <Caret />
        <Tool label="分割"><Draw d="M1 6h3M8 6h3M6 0v3M6 9v3M4 3.500h4M4 8.500h4M5 6h2" /></Tool>
        <Sep />
        <Tool label="削除"><MdDelete size={13} /></Tool>
        <Tool label="詰めて削除"><MdDeleteSweep size={13} /></Tool>
        <Sep />
        <Tool label="左に詰める"><Draw d="M10.500 1.500v9M10.500 6H1.500M4.500 3l-3 3 3 3" /></Tool>
        <Tool label="右に詰める"><Draw d="M1.500 1.500v9M1.500 6h9M7.500 3l3 3-3 3" /></Tool>
        <Tool label="すべて選択"><MdSelectAll size={12} /></Tool>
        <Overflow />
        <Grip />
        <Tool label="新規作成"><MdNoteAdd size={12} /></Tool>
        <Tool label="開く"><MdFolder size={12} /></Tool>
        <Tool label="保存"><MdSave size={12} /></Tool>
        <Sep />
        <Tool label="設定"><MdTune size={13} /></Tool>
        <Sep />
        <Tool label="レイアウト"><Draw d="M2 1h5l2 2v8H2zM7 6h4v5H7zM8 7v3M9.500 7v3" /></Tool>
        <Tool label="出力"><Draw d="M2 1h5l3 3v2M2 1v10h3M6 8h5v3H6zM7 9.500h3" /></Tool>
        <Sep />
        <Tool label="スクリーンショット"><MdPhotoCamera size={13} /></Tool>
        <Tool label="画像をコピー"><Draw d="M1.500 2h9v9h-9zM4 2V1h4v1M4 5.500h4v3.500H4zM6 6.500v1.500" /></Tool>
        <Overflow />
        <Grip />
        <button className="flex items-center gap-[3px] pl-[2px] text-[8px] leading-4 whitespace-nowrap">
          <MdOutlineFeedback size={12} />
          フィードバックを送信
        </button>
        <Overflow />
      </div>
      <div className="flex items-center h-[18px]">
        <Grip />
        <Tool label="ボイス"><MdOutlineMessage size={13} /></Tool>
        <Tool label="テキスト"><MdTitle size={14} /></Tool>
        <Tool label="動画"><MdVideocam size={14} /></Tool>
        <Tool label="音声"><MdMusicNote size={13} /></Tool>
        <Tool label="画像"><MdImage size={13} /></Tool>
        <Tool label="図形">
          <svg viewBox="0 0 12 12" className="w-3 h-3 fill-current">
            <path d="M1 1h4.500v4.500H1zM3.200 6.500 6 11.500H.5zM8.500 7h1.200v1.800h1.800V10H9.700v1.800H8.500V10H6.700V8.800h1.800z" /><circle cx="9" cy="3.200" r="2.500" />
          </svg>
        </Tool>
        <Sep />
        <Tool label="立ち絵"><MdPerson size={14} /></Tool>
        <Tool label="表情"><Draw d="M6 1a5 5 0 1 0 .1 0M4 4v1.200M8 4v1.200M3.500 7c1 2.200 4 2.200 5 0z" /></Tool>
        <Sep />
        <Tool label="エフェクト"><Draw d="M7 1.500H1.500v9h9V5M6 4v4M4 6h4M8 2h3M9.500.500v3" /></Tool>
        <Tool label="トランジション"><Draw d="M1 1h10v10H1zM5 2v8M6.500 2v1.500M8.500 3v2M6.500 5v2M8.500 7v2M6.500 8.500V10" /></Tool>
        <Tool label="シーン"><Draw d="M1 0v11h11M1 1h8v2M3 4.500h5M6 7.500h5" /></Tool>
        <Tool label="画面の複製"><MdPhotoLibrary size={13} /></Tool>
        <Tool label="パーティクル">
          <svg viewBox="0 0 12 12" className="w-3 h-3 fill-none stroke-current" strokeWidth="1.2" strokeDasharray="1.2 1.200">
            <path d="M0 1h12M0 3.400h12M0 5.800h12M0 8.200h12M0 10.600h12" />
          </svg>
        </Tool>
        <Sep />
        <Tool label="テンプレート"><MdBook size={13} /></Tool>
        <Tool label="履歴"><MdAccessTime size={13} /></Tool>
        <Overflow />
      </div>
    </div>
  );
}

/* ---------- タイムライン ---------- */

const times = [
  '00:00:13.50', '00:00:14.00', '00:00:14.50', '00:00:15.00', '00:00:15.50', '00:00:16.00', '00:00:16.50', '00:00:17.00',
  '00:00:17.50', '00:00:18.00', '00:00:18.50', '00:00:19.00', '00:00:19.50', '00:00:20.00', '00:00:20.50',
];

// 各かたまり: [開始, 終了, 上の振幅, 下の振幅]
const blobs = [
  [0, 12, 7, 13], [17, 47, 11, 15], [53, 97, 10, 13], [103, 116, 7, 14], [122, 150, 11, 15], [150, 172, 4, 5],
  [176, 187, 8, 10], [194, 228, 10, 15], [233, 275, 9, 14], [275, 291, 10, 16], [298, 311, 8, 14], [313, 361, 11, 15],
];

function wavePath() {
  let top = 'M0 18';
  let bottom = '';
  for (const [start, end, up, down] of blobs) {
    for (let x = start; x <= end; x++) {
      const t = (x - start) / (end - start);
      const env = Math.min(1, Math.sin(Math.PI * t) * 1.5);
      const jag = 0.62 + 0.38 * Math.abs(Math.sin(x * 12.9));
      const jag2 = 0.5 + 0.5 * Math.abs(Math.sin(x * 7.3 + 1));
      top += `L${x} ${(17.5 - Math.max(0.5, up * env * jag)).toFixed(1)}`;
      bottom = `L${x} ${(18.5 + Math.max(0.5, down * env * jag2)).toFixed(1)}` + bottom;
    }
  }
  return top + bottom + 'Z';
}

function LevelMeter() {
  return (
    <svg className="w-5 h-full shrink-0" viewBox="0 0 20 276" preserveAspectRatio="none" fontFamily={CJK}>
      <rect width="20" height="14" fill="#f7c5c5" />
      <rect y="14" width="20" height="10" fill="#fdeec2" />
      <rect y="24" width="20" height="15" fill="#cbe8cd" />
      <rect y="39" width="20" height="30" fill="#81c784" />
      <rect y="69" width="20" height="92" fill="#ffd54f" />
      <rect y="161" width="20" height="115" fill="#8c9ba3" />
      {Array.from({ length: 60 }, (_, i) => (
        <path key={i} d={i % 5 === 0 ? `M8 ${i * 4.6 - 0.5}h5` : `M9 ${i * 4.6 - 0.5}h2`} stroke="#333" />
      ))}
      <path d="M0 31h10M10 29h10" stroke="#43a047" strokeWidth="2" />
      <path d="M0 109h10M10 106h10" stroke="#54480c" strokeWidth="2" />
      <rect x="7" y="3" width="13" height="9" fill="#f7c5c5" />
      <text x="8" y="11" fontSize="9" fill="#222">dB</text>
    </svg>
  );
}

function LayerHead({ no, active }: { no: string; active?: boolean }) {
  return (
    <div
      className={`h-[39px] shrink-0 flex items-center pl-1 gap-[5px] text-[12px] whitespace-nowrap ${
        active ? 'border border-[#6a98b5] bg-[#eaf4fd]' : 'border-b border-[#707070] pt-px'
      }`}
    >
      <svg viewBox="0 0 6 12" className="w-[6px] h-3 shrink-0 fill-[#888]">
        <path d="M2 1h1v1H2zM2 4h1v1H2zM2 7h1v1H2zM2 10h1v1H2z" />
      </svg>
      <span>レイヤー <span className="text-[11px]">{no}</span></span>
    </div>
  );
}

function Ruler() {
  return (
    <div className="relative h-[26px] shrink-0 overflow-hidden">
      <div className="flex pl-6 pt-[1px]">
        {times.map((t) => (
          <span key={t} className="w-[103px] shrink-0 text-[11px] leading-4">{t}</span>
        ))}
      </div>
      <svg className="absolute left-0 bottom-0 w-full h-[7px] stroke-[#333]">
        {Array.from({ length: 210 }, (_, i) => {
          const x = Math.round(3.9 + i * 10.3) + 0.5;
          return <path key={i} d={`M${x} ${i % 5 === 2 ? 0 : 3}V7`} />;
        })}
      </svg>
    </div>
  );
}

function Timeline() {
  return (
    <div className="flex-1 min-h-0 flex">
      <div className="w-[80px] shrink-0 pt-[18px] border-r border-[#606060] flex flex-col overflow-hidden">
        <LayerHead no="01" />
        <LayerHead no="02" active />
        <LayerHead no="03" />
        <LayerHead no="04" />
        <LayerHead no="05" />
      </div>
      <div className="relative flex-1 min-w-0 flex flex-col overflow-hidden">
        <Ruler />
        <div className="h-[31px] shrink-0 border-b border-[#707070] bg-linear-to-r from-[#5c0000] to-[#7e0000] flex items-center pb-[4px] pl-[6px] text-[11px] text-white">
          LE_off vocal_3.wav
        </div>
        <div className="h-[39px] shrink-0 border-b border-[#707070] bg-[#e5f1fb] pt-[3px] flex">
          <div className="relative w-[680px] shrink-0 bg-linear-to-r from-[#929200] to-[#ffff00] to-92% flex items-center pl-[6px] text-[11px] text-white whitespace-nowrap">
            僕はプロでもなんでもないし音に関してはあんまり細かく言いたくないんで次行きましょ
            <span className="absolute left-[618px] inset-y-0 border-l border-dashed border-[#ffffa0]" />
          </div>
          <svg className="w-[430px] h-full shrink-0 bg-linear-to-r from-[#4f4a4a] to-[#b24d4d]">
            <path d={wavePath()} fill="#bba9a9" stroke="#bba9a9" strokeWidth="0.5" />
            <path d="M367.500 0v36" stroke="#f0dede" strokeDasharray="5 3" />
            <rect x="0.500" y="0.500" width="429" height="34" fill="none" stroke="#222" />
            <rect x="0.500" y="0.500" width="429" height="34" fill="none" stroke="#fff" strokeDasharray="4 4" />
          </svg>
        </div>
        <div className="h-[39px] shrink-0 border-b border-[#707070]" />
        <div className="h-[39px] shrink-0 border-b border-[#707070]" />
        <span className="absolute left-[866px] inset-y-0 w-px bg-[#e01414]" />
      </div>
      <div className="w-[17px] shrink-0 bg-[#f0f0f0] flex flex-col items-center">
        <Chevron className="rotate-180 mt-[30px] shrink-0 opacity-60" />
        <div className="mt-7 w-full h-[77px] bg-[#cdcdcd]" />
        <Chevron className="mt-auto mb-[5px] shrink-0 opacity-60" />
      </div>
    </div>
  );
}

function SerifBar() {
  const [text, setText] = useState('');
  return (
    <div className="h-[26px] shrink-0 flex">
      <div className="relative w-[119px] shrink-0">
        <select aria-label="キャラクター" className="appearance-none w-full h-full pl-[13px] pt-[2px] border border-[#acacac] bg-linear-to-b from-[#f0f0f0] to-[#e5e5e5] text-[12px] leading-4">
          <option>ゆっくり魔理沙</option>
        </select>
        <span className="absolute left-[6px] top-[3px] w-1 h-5 bg-[#ffff00]" />
        <Chevron className="absolute right-[5px] top-[7px] pointer-events-none" />
      </div>
      <button aria-label="キャラクターの編集" className="ml-px w-[26px] shrink-0 border border-[#707070] bg-[#ddd] flex items-center justify-center">
        <svg viewBox="0 0 14 14" className="w-[14px] h-[14px] fill-[#222]">
          <circle cx="6" cy="4" r="2.800" /><path d="M1 12c0-3 3-4 5-4 1 0 2 .2 3 .7L6 12z" /><path d="m7.500 12.500.5-2 4-4 1.500 1.500-4 4z" />
        </svg>
      </button>
      <input
        aria-label="セリフ"
        placeholder="ここにセリフを入力"
        value={text}
        onChange={(e) => setText(e.target.value)}
        className="flex-1 min-w-0 border border-[#acacac] bg-white pl-[5px] pt-[2px] text-[12px] leading-4 placeholder:text-[#888]"
      />
      <button disabled className="w-[102px] shrink-0 border border-[#adb2b5] bg-[#f4f4f4] pt-[2px] text-[12px] text-[#838383]">追加</button>
      <button aria-label="追加方法" className="w-[18px] shrink-0 border border-l-0 border-[#acacac] bg-[#f0f0f0] flex items-center justify-center">
        <Chevron />
      </button>
    </div>
  );
}

function TabStrip() {
  return (
    <div className="mt-[5px] h-[27px] shrink-0 flex bg-white border-b border-[#b0b0b0]">
      <button className="w-[124px] -mb-px border border-b-0 border-[#b0b0b0] bg-white flex items-center pl-[3px] gap-[9px] text-[11px]">
        <svg viewBox="0 0 6 12" className="w-[6px] h-3 fill-[#888]"><path d="M2 1h1v1H2zM2 4h1v1H2zM2 7h1v1H2zM2 10h1v1H2z" /></svg>
        メイン
      </button>
      <button aria-label="タブを追加" className="w-[26px] flex items-center justify-center">
        <svg viewBox="0 0 8 8" className="w-2 h-2 stroke-[#222]"><path d="M4 0v8M0 4h8" /></svg>
      </button>
      <div className="ml-auto pr-[6px] flex items-center gap-[13px]">
        <button aria-label="一覧"><MdMenu size={11} className="text-[#777]" /></button>
        <button aria-label="設定"><MdSettings size={12} className="text-[#222]" /></button>
      </div>
    </div>
  );
}

/* ---------- ウィンドウ ---------- */

function TitleBar() {
  return (
    <header className="h-6 shrink-0 bg-[#eaf3f9] flex items-center pl-[2px] pr-[2px] pb-[2px] text-black">
      <span className="w-4 h-4 rounded-full bg-[#111] text-white text-[10px] leading-4 text-center">ゆ</span>
      <h1 className="ml-[5px] text-[11px]">ゆっくりMovieMaker v4.44.0.4</h1>
      <div className="ml-auto flex">
        <button aria-label="最小化" className="w-[46px] flex justify-center"><svg viewBox="0 0 10 10" className="w-[10px] h-[10px] stroke-black"><path d="M0 5.500h10" /></svg></button>
        <button aria-label="元に戻す" className="w-[46px] flex justify-center">
          <svg viewBox="0 0 10 10" className="w-[10px] h-[10px] stroke-black fill-none"><path d="M.5 2.500h7v7h-7zM2.500 2.500v-1q0-1 1-1h5q1 0 1 1v5q0 1-1 1h-1" /></svg>
        </button>
        <button aria-label="閉じる" className="w-[46px] flex justify-center"><svg viewBox="0 0 10 10" className="w-[10px] h-[10px] stroke-black"><path d="M0 0l10 10M10 0 0 10" /></svg></button>
      </div>
    </header>
  );
}

const menus = ['ファイル(F)', '編集(E)', '表示(V)', 'ツール(T)', 'ヘルプ(H)'];

function StatusBar() {
  return (
    <footer className="h-[26px] shrink-0 bg-[#f0eeee] flex items-center pt-[2px] pl-[6px] text-[11px] whitespace-nowrap [&>span]:h-[22px] [&>span]:flex [&>span]:items-center">
      <span className="w-[146px] gap-[9px] border-r border-[#555]">00:00:17.58<b className="font-normal">/</b>00:03:15.21</span>
      <span className="w-[91px] pl-2 gap-[9px] border-r border-[#555]">1055<b className="font-normal">/</b>11713</span>
      <span className="w-[38px] pl-[5px] border-r border-[#555]">x0.18</span>
      <span className="w-[154px] pl-[7px] border-r border-[#555]">2160x3840 60fps 48000Hz</span>
      <span className="pl-[6px] text-[11px]">無題*</span>
    </footer>
  );
}

export default function App() {
  return (
    <div className="h-screen flex flex-col bg-[#f0f0f0] text-[12px] leading-4 text-[#222] overflow-hidden font-['Noto_Sans','Noto_Sans_CJK_JP',sans-serif] [font-feature-settings:'palt']">
      <TitleBar />
      <nav className="h-[17px] shrink-0 bg-[#eee] flex items-center gap-[14px] pl-[7px] text-[11px]">
        {menus.map((m) => (
          <button key={m}>{m}</button>
        ))}
      </nav>
      <div className="flex-1 min-h-0 flex gap-[5px]">
        <main className="flex-1 min-w-0 flex flex-col">
          <Preview />
          <PlayerBar />
          <TabStrip />
          <div className="h-[276px] shrink-0 flex">
            <LevelMeter />
            <div className="flex-1 min-w-0 flex flex-col bg-white">
              <Toolbar />
              <Timeline />
              <div className="h-[17px] shrink-0 bg-[#f0f0f0] flex items-center pl-[84px] pr-[22px]">
                <Chevron className="rotate-90 opacity-60" />
                <div className="ml-[102px] w-[53px] h-full bg-[#cdcdcd]" />
                <Chevron className="-rotate-90 ml-auto opacity-60" />
              </div>
              <SerifBar />
            </div>
          </div>
        </main>
        <SettingsPanel />
      </div>
      <StatusBar />
    </div>
  );
}
